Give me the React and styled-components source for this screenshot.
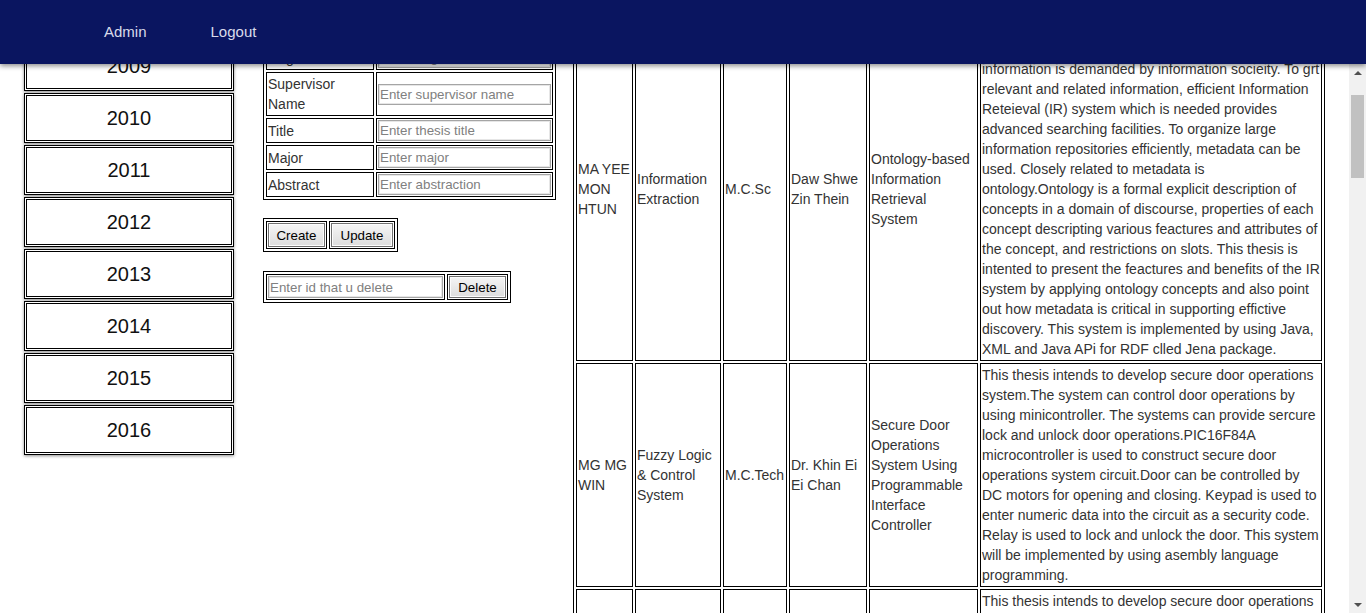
import React, { useRef, useLayoutEffect, useState } from 'react';
import styled, { createGlobalStyle } from 'styled-components';

const GlobalStyle = createGlobalStyle`
  html, body {
    margin: 0;
    height: 100%;
    overflow: hidden;
  }
  body {
    font-family: "Liberation Sans", Arial, sans-serif;
    font-size: 14px;
    line-height: 20px;
    color: #333;
    background: #fff;
  }
`;

const Page = styled.div`
  display: flex;
  flex-direction: column;
  height: 100vh;
`;

const NavBar = styled.div`
  flex: none;
  height: 64px;
  display: flex;
  align-items: center;
  gap: 64px;
  padding-left: 104px;
  background: #0a1560;
  box-shadow: 0 2px 5px rgba(0, 0, 0, 0.45);
  position: relative;
  z-index: 2;
`;

const NavLink = styled.a`
  color: #d9dbea;
  font-size: 15px;
  text-decoration: none;
  cursor: pointer;
`;

const Body = styled.div`
  flex: 1;
  min-height: 0;
  display: flex;
`;

const ScrollArea = styled.div`
  flex: 1;
  overflow-y: scroll;
  scrollbar-width: none;

  &::-webkit-scrollbar {
    display: none;
  }
`;

const ScrollTrack = styled.div`
  flex: none;
  width: 17px;
  background: #f1f1f1;
  display: flex;
  flex-direction: column;
`;

const ScrollArrow = styled.div`
  flex: none;
  height: 17px;
  display: flex;
  align-items: center;
  justify-content: center;
`;

const ThumbLane = styled.div`
  flex: 1;
  display: flex;
  flex-direction: column;
  padding: 0 2px;
`;

const Thumb = styled.div`
  flex: none;
  background: #c1c1c1;
`;

const Content = styled.div`
  display: flex;
  align-items: flex-start;
  padding: 16px 0 60px 24px;
`;

const YearList = styled.div`
  flex: none;
  width: 210px;
  margin: 4px 29px 0 0;
  display: flex;
  flex-direction: column;
  gap: 2px;
`;

const YearBox = styled.div`
  box-sizing: border-box;
  height: 50px;
  border: 3px double #000;
  background: #fff;
  box-shadow: 0 1px 3px rgba(0, 0, 0, 0.45);
  display: flex;
  align-items: center;
  justify-content: center;
  font-size: 20px;
  color: #111;
  cursor: pointer;
`;

const FormColumn = styled.div`
  flex: none;
  width: 293px;
  margin: 3px 17px 0 0;
`;

const BoxTable = styled.table`
  border: 1px solid #000;
  border-spacing: 2px;
  margin-top: ${p => p.$top || 0}px;

  td {
    border: 1px solid #000;
    padding: 1px;
    vertical-align: middle;
  }
`;

const LabelCell = styled.td`
  width: 104px;
`;

const TextInput = styled.input`
  box-sizing: border-box;
  display: block;
  width: ${p => p.$w}px;
  height: ${p => p.$h || 21}px;
  padding: 0 1px;
  border: 1px solid #a5a5a5;
  box-shadow: inset 0 0 0 1px #e6e6e6;
  font-family: "Liberation Sans", Arial, sans-serif;
  font-size: 13.33px;
  color: #000;
  outline: none;

  &::placeholder {
    color: #808080;
  }
`;

const Button = styled.button`
  display: block;
  height: ${p => p.$h || 24}px;
  padding: 0 7px;
  border: 1px solid #707070;
  box-shadow: inset 0 0 0 1px #fcfcfc;
  background: linear-gradient(#f5f5f5, #dddddd);
  font-family: "Liberation Sans", Arial, sans-serif;
  font-size: 13.33px;
  color: #000;
  width: ${p => p.$w}px;
`;

const ThesisTable = styled.table`
  flex: none;
  width: 752px;
  table-layout: fixed;
  border: 1px solid #000;
  border-spacing: 2px;
  margin-top: 3px;

  th, td {
    border: 1px solid #000;
    padding: 1px;
    vertical-align: middle;
    box-sizing: border-box;
  }
  th {
    white-space: nowrap;
    overflow: hidden;
  }
`;

const HeadCell = styled.th`
  width: ${p => p.$w}px;
`;

const years = [2008, 2009, 2010, 2011, 2012, 2013, 2014, 2015, 2016];

const fields = [
  ['ID', 'Enter id'],
  ['Name', 'Enter student name'],
  ['Degree', 'Enter degree'],
  ['Supervisor Name', 'Enter supervisor name'],
  ['Title', 'Enter thesis title'],
  ['Major', 'Enter major'],
  ['Abstract', 'Enter abstraction'],
];

const columns = [
  ['Name', 57],
  ['Major', 86],
  ['Degree', 64],
  ['Supervisor', 78],
  ['Title', 109],
  ['Abstract', 342],
];

const doorThesis = {
  name: 'MG MG WIN',
  major: 'Fuzzy Logic & Control System',
  degree: 'M.C.Tech',
  supervisor: 'Dr. Khin Ei Ei Chan',
  title: 'Secure Door Operations System Using Programmable Interface Controller',
  abstract: 'This thesis intends to develop secure door operations system.The system can control door operations by using minicontroller. The systems can provide sercure lock and unlock door operations.PIC16F84A microcontroller is used to construct secure door operations system circuit.Door can be controlled by DC motors for opening and closing. Keypad is used to enter numeric data into the circuit as a security code. Relay is used to lock and unlock the door. This system will be implemented by using asembly language programming.',
};

const moreTheses = [
  {
    name: 'MA THIDA AUNG',
    major: 'Image Processing',
    degree: 'M.C.Sc',
    supervisor: 'Dr. Nwe Nwe Win',
    title: 'Face Detection System Using Skin Color Segmentation',
    abstract: 'Face detection is the first step of many applications such as face recognition, surveillance and human computer interaction. This thesis presents a face detection system based on skin color segmentation in YCbCr color space. The input image is converted and the skin regions are extracted by using threshold values. Morphological operations are applied to remove noise and the candidate regions are verified by using the features of the face. The system is implemented by using Java programming language.',
  },
  {
    name: 'MG AUNG KO KO',
    major: 'Networking',
    degree: 'M.C.Tech',
    supervisor: 'Daw Aye Aye Myint',
    title: 'Network Traffic Monitoring System Using SNMP',
    abstract: 'Network administrators need to know the status of the devices in the network. This thesis intends to develop a network traffic monitoring system by using Simple Network Management Protocol. The system collects the information of the interfaces from the managed devices and shows the bandwidth utilization of each link. The administrator can see the traffic load and can find the problems of the network easily. This system is implemented by using C# and SNMP library.',
  },
  {
    name: 'MA SU SU HLAING',
    major: 'Data Mining',
    degree: 'M.C.Sc',
    supervisor: 'Dr. Thandar Thein',
    title: 'Classification of Student Performance Using Decision Tree',
    abstract: 'Educational data mining is used to discover the knowledge from the data of the students. This thesis presents the classification of student performance by using ID3 decision tree algorithm. The attributes such as attendance, class test, assignment and lab work are used to build the decision tree. The classification rules are generated from the tree and these rules can help the teachers to predict the result of the students before the final examination.',
  },
  {
    name: 'MG KYAW ZIN OO',
    major: 'Cryptography',
    degree: 'M.C.Tech',
    supervisor: 'Dr. Khin Ei Ei Chan',
    title: 'Secure File Transfer System Using RSA Algorithm',
    abstract: 'Security is an important issue when the data are transferred over the network. This thesis intends to develop a secure file transfer system by using RSA public key algorithm. The sender encrypts the file with the public key of the receiver and the receiver decrypts the file with his private key. The system can protect the confidential data from the unauthorized users. This system is implemented by using Java socket programming.',
  },
];

const theses = [
  {
    name: 'MA YEE MON HTUN',
    major: 'Information Extraction',
    degree: 'M.C.Sc',
    supervisor: 'Daw Shwe Zin Thein',
    title: 'Ontology-based Information Retrieval System',
    abstract: 'Today, the World Wide Web is growing rapidly and a large amount of knowledge and more and more information is demanded by information socieity. To grt relevant and related information, efficient Information Reteieval (IR) system which is needed provides advanced searching facilities. To organize large information repositories efficiently, metadata can be used. Closely related to metadata is ontology.Ontology is a formal explicit description of concepts in a domain of discourse, properties of each concept descripting various feactures and attributes of the concept, and restrictions on slots. This thesis is intented to present the feactures and benefits of the IR system by applying ontology concepts and also point out how metadata is critical in supporting effictive discovery. This system is implemented by using Java, XML and Java APi for RDF clled Jena package.',
  },
  doorThesis,
  doorThesis,
  ...moreTheses,
  ...moreTheses,
  ...moreTheses,
  doorThesis,
];

const Arrow = ({ down }) => (
  <svg width="8" height="4" viewBox="0 0 8 4">
    <polygon points={down ? '0,0 8,0 4,4' : '0,4 8,4 4,0'} fill="#505050" />
  </svg>
);

const App = () => {
  const areaRef = useRef(null);
  const [bar, setBar] = useState({ top: 0, height: 0 });

  const measure = () => {
    const el = areaRef.current;
    if (!el) return;
    const lane = el.clientHeight - 34;
    setBar({
      top: (lane * el.scrollTop) / el.scrollHeight,
      height: Math.max(20, (lane * el.clientHeight) / el.scrollHeight),
    });
  };

  useLayoutEffect(() => {
    if (areaRef.current) areaRef.current.scrollTop = 95;
    measure();
  }, []);

  return (
    <Page>
      <GlobalStyle />
      <NavBar>
        <NavLink>Admin</NavLink>
        <NavLink>Logout</NavLink>
      </NavBar>
      <Body>
        <ScrollArea ref={areaRef} onScroll={measure}>
          <Content>
            <YearList>
              {years.map(year => (
                <YearBox key={year}>{year}</YearBox>
              ))}
            </YearList>

            <FormColumn>
              <BoxTable>
                <tbody>
                  {fields.map(([label, placeholder]) => (
                    <tr key={label}>
                      <LabelCell>{label}</LabelCell>
                      <td>
                        <TextInput $w={173} placeholder={placeholder} />
                      </td>
                    </tr>
                  ))}
                </tbody>
              </BoxTable>

              <BoxTable $top={18}>
                <tbody>
                  <tr>
                    <td><Button $w={57}>Create</Button></td>
                    <td><Button $w={62}>Update</Button></td>
                  </tr>
                </tbody>
              </BoxTable>

              <BoxTable $top={19}>
                <tbody>
                  <tr>
                    <td><TextInput $w={175} $h={22} placeholder="Enter id that u delete" /></td>
                    <td><Button $w={57} $h={22}>Delete</Button></td>
                  </tr>
                </tbody>
              </BoxTable>
            </FormColumn>

            <ThesisTable>
              <thead>
                <tr>
                  {columns.map(([label, w]) => (
                    <HeadCell key={label} $w={w}>{label}</HeadCell>
                  ))}
                </tr>
              </thead>
              <tbody>
                {theses.map((t, i) => (
                  <tr key={i}>
                    <td>{t.name}</td>
                    <td>{t.major}</td>
                    <td>{t.degree}</td>
                    <td>{t.supervisor}</td>
                    <td>{t.title}</td>
                    <td>{t.abstract}</td>
                  </tr>
                ))}
              </tbody>
            </ThesisTable>
          </Content>
        </ScrollArea>

        <ScrollTrack>
          <ScrollArrow><Arrow /></ScrollArrow>
          <ThumbLane>
            <Thumb style={{ marginTop: bar.top, height: bar.height }} />
          </ThumbLane>
          <ScrollArrow><Arrow down /></ScrollArrow>
        </ScrollTrack>
      </Body>
    </Page>
  );
};

export default App;
